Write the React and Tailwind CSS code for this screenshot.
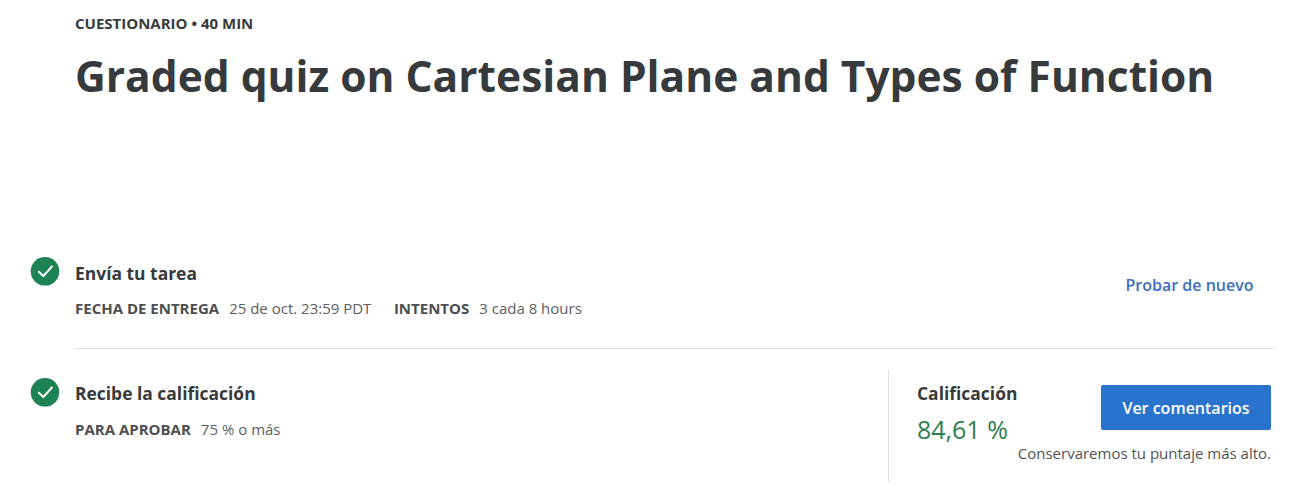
function Check() {
  return (
    <svg className="h-[30px] w-[30px] shrink-0" viewBox="0 0 30 30" fill="none">
      <circle cx="15" cy="14.3" r="14.3" fill="#1d8354" />
      <path d="M8.3 14.2 L13.4 19 L22.5 8.8" stroke="#fff" strokeWidth="2" />
    </svg>
  );
}

export default function App() {
  return (
    <main className="h-[501px] w-[1294px] overflow-hidden bg-white pr-5 pl-[30px] font-['Open_Sans',sans-serif] text-[#373a3c]">
      <header className="h-[257px] pt-[13px] pl-[45px] whitespace-nowrap">
        <p className="text-[15px] leading-[20px] font-bold"><span>CUESTIONARIO • 40 MIN</span></p>
        <h1 className="mt-[13px] text-[42.5px] leading-[60px] font-bold"><span>Graded quiz on Cartesian Plane and Types of Function</span></h1>
      </header>
      <section className="flex h-[92px]">
        <Check />
        <div className="ml-[15px] flex flex-1 justify-between border-b border-[#dedede] whitespace-nowrap">
          <div className="pt-1">
            <h2 className="text-[17.45px] leading-6 font-bold"><span>Envía tu tarea</span></h2>
            <p className="mt-[12px] flex text-[15px] leading-[22px] text-[#4c4f51]">
              <span className="mr-[10px] font-bold">FECHA DE ENTREGA</span>
              <span className="mr-[22.5px] text-[#5c5e60]">25 de oct. 23:59 PDT</span>
              <span className="mr-[10px] font-bold">INTENTOS</span>
              <span className="text-[#5c5e60]">3 cada 8 hours</span>
            </p>
          </div>
          <a className="mt-4 mr-[20.5px] text-[16px] leading-6 font-semibold text-[#3b6fbd]">Probar de nuevo</a>
        </div>
      </section>
      <section className="flex pt-[21px]">
        <div className="flex w-[858px] pt-[8px] whitespace-nowrap">
          <Check />
          <div className="ml-[15px] pt-[3px]">
            <h2 className="text-[17.45px] leading-6 font-bold"><span>Recibe la calificación</span></h2>
            <p className="mt-[13px] flex text-[15px] leading-[22px] text-[#4c4f51]">
              <span className="mr-[10px] font-bold">PARA APROBAR</span>
              <span className="text-[#5c5e60]">75 % o más</span>
            </p>
          </div>
        </div>
        <div className="flex h-[112px] flex-1 justify-between border-l border-[#dedede] pl-7 whitespace-nowrap">
          <div className="w-[100px] shrink-0 pt-[11px]">
            <h2 className="text-[17.45px] leading-6 font-bold"><span>Calificación</span></h2>
            <p className="mt-[6px] text-[25px] leading-9 text-[#2d7d50]"><span>84,61 %</span></p>
          </div>
          <div className="mr-[3px] flex flex-col items-end pt-[15px]">
            <button className="h-[45px] w-[170px] rounded-[2px] bg-[#2a73cc] text-[16px] font-semibold text-white">Ver comentarios</button>
            <p className="mt-[12px] text-[15px] leading-[22px] text-[#505254]"><span>Conservaremos tu puntaje más alto.</span></p>
          </div>
        </div>
      </section>
    </main>
  );
}
